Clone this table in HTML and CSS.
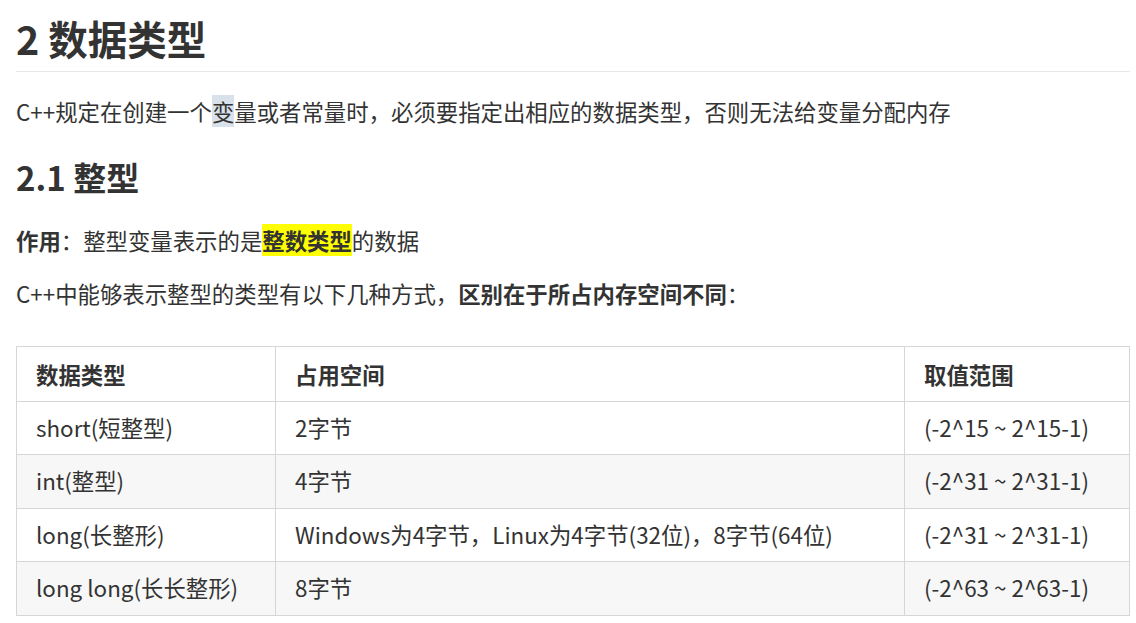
FILE: index.html
```html
<!DOCTYPE html>
<html lang="zh-CN">
<head>
  <meta charset="UTF-8">
  <title>2 数据类型</title>
  <link rel="stylesheet" href="styles.css">
</head>
<body>
  <div class="write">
    <h1>2 数据类型</h1>

    <p class="intro">C++规定在创建一个<span class="sel">变</span>量或者常量时，必须要指定出相应的数据类型，否则无法给变量分配内存</p>

    <h2>2.1 整型</h2>

    <p class="use"><strong>作用</strong>：整型变量表示的是<mark><strong>整数类型</strong></mark>的数据</p>
    <p class="ways">C++中能够表示整型的类型有以下几种方式，<strong>区别在于所占内存空间不同</strong>：</p>

    <table>
      <thead>
        <tr>
          <th class="c1">数据类型</th>
          <th class="c2">占用空间</th>
          <th class="c3">取值范围</th>
        </tr>
      </thead>
      <tbody>
        <tr>
          <td>short(短整型)</td>
          <td>2字节</td>
          <td>(-2^15 ~ 2^15-1)</td>
        </tr>
        <tr>
          <td>int(整型)</td>
          <td>4字节</td>
          <td>(-2^31 ~ 2^31-1)</td>
        </tr>
        <tr>
          <td>long(长整形)</td>
          <td>Windows为4字节，Linux为4字节(32位)，8字节(64位)</td>
          <td>(-2^31 ~ 2^31-1)</td>
        </tr>
        <tr>
          <td>long long(长长整形)</td>
          <td>8字节</td>
          <td>(-2^63 ~ 2^63-1)</td>
        </tr>
      </tbody>
    </table>
  </div>
</body>
</html>
```

FILE: styles.css
```css
html, body { margin: 0; padding: 0; background: #fff; }
body {
  font-family: "Noto Sans CJK SC", "Open Sans", sans-serif;
  color: #333;
  font-size: 22.4px;
}
.write { padding: 0 6px 0 16px; }

h1 {
  font-size: 39.5px;
  line-height: 46px;
  font-weight: bold;
  margin: 15px 0 0;
  padding-bottom: 10px;
  border-bottom: 1px solid #e8e8e8;
}
h2 {
  font-size: 33px;
  line-height: 40px;
  font-weight: bold;
  margin: 29px 0 0;
}
p { margin: 0; line-height: 34px; }
p.intro { margin-top: 22px; }
p.use { margin-top: 26px; }
p.ways { margin-top: 19px; }

.sel { background: #d9e1ea; }
mark { background: #ffff00; color: #333; }

table {
  margin-top: 36px;
  width: 100%;
  border-collapse: collapse;
}
th, td {
  border: 1px solid #d6d6d6;
  padding: 10px 19px;
  line-height: 32.5px;
  text-align: left;
}
th { font-weight: bold; padding-top: 11px; padding-bottom: 10px; }
th.c1 { width: 220px; }
th.c2 { width: 590px; }
td { padding-top: 9px; padding-bottom: 11px; }
tbody tr:nth-child(even) { background: #f7f7f7; }
```
